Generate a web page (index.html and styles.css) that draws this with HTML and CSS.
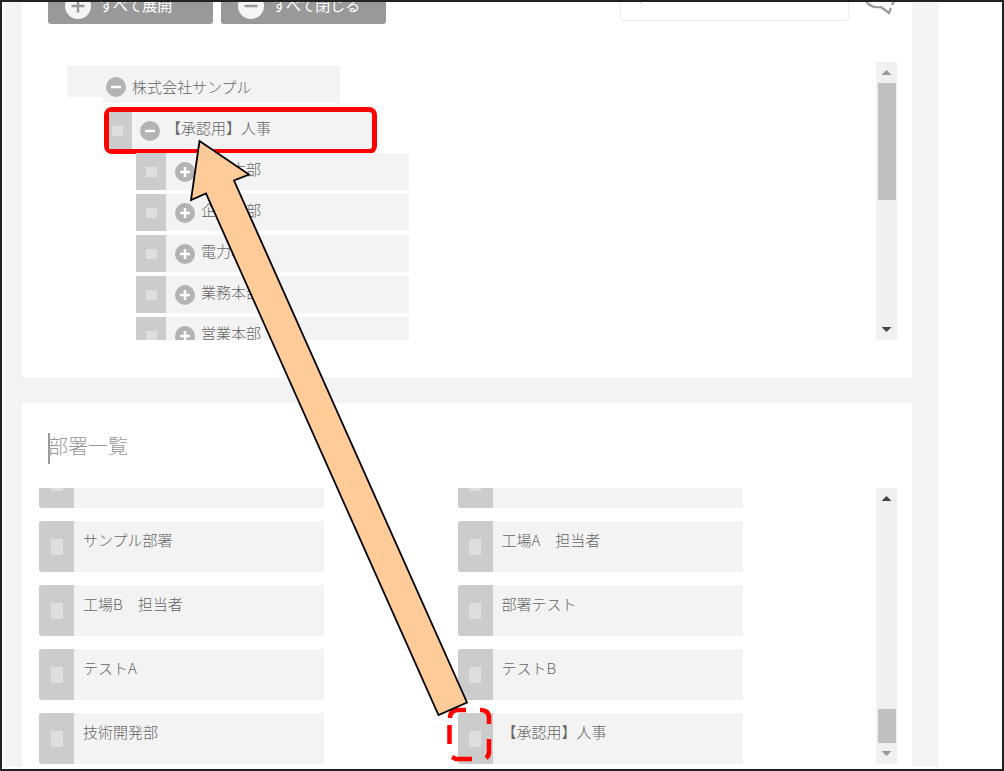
FILE: index.html
```html
<!DOCTYPE html>
<html lang="ja">
<head>
  <meta charset="UTF-8">
  <meta name="viewport" content="width=device-width, initial-scale=1.0">
  <title>部署一覧</title>
  <link rel="stylesheet" href="styles.css">
</head>
<body>
  <div class="frame">
    <main class="page">
      <section class="panel tree-panel">
        <div class="toolbar">
          <button type="button" class="tool-btn">
            <svg class="tool-icon" viewBox="0 0 26 26"><circle cx="13" cy="13" r="13" fill="#f5f5f5"/><path d="M6.500 13h13M13 6.500v13" stroke="#999" stroke-width="2.500"/></svg>
            <span class="tool-text">すべて展開</span>
          </button>
          <button type="button" class="tool-btn">
            <svg class="tool-icon" viewBox="0 0 26 26"><circle cx="13" cy="13" r="13" fill="#f5f5f5"/><path d="M6.500 13h13" stroke="#999" stroke-width="2.500"/></svg>
            <span class="tool-text">すべて閉じる</span>
          </button>
          <input type="text" class="search" aria-label="部署検索" value="すべて">
          <svg class="chat-icon" viewBox="0 0 30 30"><path d="M1 15C4 20 9 22 16 21L24 27L26 22M27 19L29 15" fill="none" stroke="#999" stroke-width="2.200"/></svg>
        </div>

        <div class="scroll-area tree-area">
          <ul class="tree">
            <li class="node root">
              <svg class="toggle" viewBox="0 0 20 20"><circle cx="10" cy="10" r="10" fill="#b3b3b3"/><path d="M5 10h10" stroke="#fff" stroke-width="2.500"/></svg>
              <span class="name">株式会社サンプル</span>
            </li>
            <li class="node selected">
              <span class="handle"></span>
              <svg class="toggle" viewBox="0 0 20 20"><circle cx="10" cy="10" r="10" fill="#b3b3b3"/><path d="M5 10h10" stroke="#fff" stroke-width="2.500"/></svg>
              <span class="name">【承認用】人事</span>
            </li>
            <li class="node child">
              <span class="handle"></span>
              <svg class="toggle" viewBox="0 0 20 20"><circle cx="10" cy="10" r="10" fill="#b3b3b3"/><path d="M5 10h10M10 5v10" stroke="#fff" stroke-width="2.500"/></svg>
              <span class="name">管理本部</span>
            </li>
            <li class="node child">
              <span class="handle"></span>
              <svg class="toggle" viewBox="0 0 20 20"><circle cx="10" cy="10" r="10" fill="#b3b3b3"/><path d="M5 10h10M10 5v10" stroke="#fff" stroke-width="2.500"/></svg>
              <span class="name">企画本部</span>
            </li>
            <li class="node child">
              <span class="handle"></span>
              <svg class="toggle" viewBox="0 0 20 20"><circle cx="10" cy="10" r="10" fill="#b3b3b3"/><path d="M5 10h10M10 5v10" stroke="#fff" stroke-width="2.500"/></svg>
              <span class="name">電力本部</span>
            </li>
            <li class="node child">
              <span class="handle"></span>
              <svg class="toggle" viewBox="0 0 20 20"><circle cx="10" cy="10" r="10" fill="#b3b3b3"/><path d="M5 10h10M10 5v10" stroke="#fff" stroke-width="2.500"/></svg>
              <span class="name">業務本部</span>
            </li>
            <li class="node child">
              <span class="handle"></span>
              <svg class="toggle" viewBox="0 0 20 20"><circle cx="10" cy="10" r="10" fill="#b3b3b3"/><path d="M5 10h10M10 5v10" stroke="#fff" stroke-width="2.500"/></svg>
              <span class="name">営業本部</span>
            </li>
          </ul>
          <div class="scrollbar">
            <span class="arrow up off"></span>
            <span class="thumb tall"></span>
            <span class="arrow down"></span>
          </div>
        </div>
      </section>

      <section class="panel list-panel">
        <h2 class="title">部署一覧</h2>
        <div class="scroll-area list-area">
          <ul class="cards">
            <li class="card"><span class="grip"></span></li>
            <li class="card"><span class="grip"></span></li>
            <li class="card"><span class="grip"></span><span class="label">サンプル部署</span></li>
            <li class="card"><span class="grip"></span><span class="label">工場A　担当者</span></li>
            <li class="card"><span class="grip"></span><span class="label">工場B　担当者</span></li>
            <li class="card"><span class="grip"></span><span class="label">部署テスト</span></li>
            <li class="card"><span class="grip"></span><span class="label">テストA</span></li>
            <li class="card"><span class="grip"></span><span class="label">テストB</span></li>
            <li class="card"><span class="grip"></span><span class="label">技術開発部</span></li>
            <li class="card"><span class="grip"></span><span class="label">【承認用】人事</span></li>
          </ul>
          <div class="scrollbar">
            <span class="arrow up"></span>
            <span class="thumb short"></span>
            <span class="arrow down off"></span>
          </div>
        </div>
      </section>
    </main>
  </div>

  <!-- drag guide: from the card to the tree node -->
  <svg class="guide" width="1004" height="771" viewBox="0 0 1004 771">
    <path d="M450 718Q450 710 459 710H466M480 710Q489 710 489 718V724M449.500 725V744M489 739V752Q489 756 486 758M452 757L456 759H472" fill="none" stroke="#f00" stroke-width="4.500"/>
    <path d="M199.500 141L249 174.500L234 180.500L467 702.500L438.500 715L206 193.500L191 200Z" fill="#fc9" stroke="#000" stroke-width="1.800"/>
  </svg>
</body>
</html>
```
FILE: styles.css
```css
* {
  box-sizing: border-box;
}
body {
  margin: 0;
  font-family: "Noto Sans CJK JP", "Noto Sans", sans-serif;
  font-size: 15px;
  font-weight: 300;
  color: #666;
  background: #fff;
}
ul {
  list-style: none;
  margin: 0;
  padding: 0;
}
.frame {
  height: 100vh;
  border: 2px solid #222;
  padding: 0 64px 2px 2px;
  overflow: hidden;
}
.page {
  display: flex;
  flex-direction: column;
  gap: 26px;
  height: 100%;
  padding: 0 26px 0 18px;
  background: #f3f3f3;
}
.panel {
  background: #fff;
}
.tree-panel {
  padding: 0 15px 37px 26px;
}
.list-panel {
  flex: 1;
  padding: 30px 15px 0 17px;
}

/* toolbar */
.toolbar {
  display: flex;
  align-items: flex-end;
  gap: 8px;
  height: 22px;
  margin-bottom: 38px;
  overflow: hidden;
}
.tool-btn {
  display: flex;
  flex: none;
  align-items: center;
  gap: 8px;
  width: 165px;
  height: 37px;
  padding: 0 0 0 17px;
  border: 0;
  border-radius: 3px;
  background: #999;
  color: #fff;
  font-family: inherit;
  font-size: 15px;
}
.tool-icon {
  width: 26px;
  height: 26px;
}
.tool-text {
  padding-bottom: 3px;
}
.search {
  flex: none;
  width: 229px;
  height: 40px;
  margin: 0 8px 3px auto;
  padding: 0 14px 14px;
  border: 1px solid #eee;
  border-radius: 3px;
  color: #333;
  font-family: inherit;
  font-size: 15px;
}
.chat-icon {
  flex: none;
  width: 30px;
  height: 30px;
  margin: 0 2px 8px 0;
}

/* scrolling boxes */
.scroll-area {
  display: flex;
  justify-content: space-between;
  overflow: hidden;
}
.tree-area {
  height: 278px;
}
.list-area {
  height: 276px;
}
.scrollbar {
  display: flex;
  flex: none;
  flex-direction: column;
  align-items: center;
  width: 21px;
  background: #f0f0f0;
}
.thumb {
  width: 18px;
  background: #c0c0c0;
}
.tall {
  height: 117px;
  margin-bottom: auto;
}
.short {
  height: 34px;
  margin-top: auto;
}
.arrow {
  width: 10px;
  height: 5px;
  margin: 8px 0;
  background: #444;
}
.up {
  clip-path: polygon(50% 0, 100% 100%, 0 100%);
}
.down {
  clip-path: polygon(0 0, 100% 0, 50% 100%);
}
.off {
  background: #999;
}

/* tree */
.tree {
  display: flex;
  flex: 1;
  flex-direction: column;
  gap: 4px;
  padding: 4px 0 0 19px;
}
.node {
  display: flex;
  flex: none;
  align-items: center;
  gap: 6px;
  width: 273px;
  height: 37px;
  background: #f3f3f3;
}
.root {
  padding: 5px 0 0 39px;
  background: linear-gradient(#f3f3f3, #f3f3f3) right / 237px 37px no-repeat,
    linear-gradient(#f3f3f3, #f3f3f3) left top / 100% 31px no-repeat;
}
.selected {
  height: 47px;
  margin: 0 0 -5px 37px;
  border: 5px solid #f00;
  border-radius: 8px;
}
.child {
  margin-left: 69px;
}
.handle {
  display: flex;
  align-items: center;
  justify-content: center;
  align-self: stretch;
  width: 30px;
  margin-right: 3px;
  background: #ccc;
}
.handle::before {
  content: "";
  width: 11px;
  height: 10px;
  background: #dedede;
}
.selected .handle {
  width: 23px;
  padding-right: 7px;
  margin-right: 2px;
}
.toggle {
  width: 20px;
  height: 20px;
}
.name {
  padding-bottom: 6px;
}
.root .name {
  padding-bottom: 2px;
}

/* department cards */
.title {
  display: flex;
  align-items: center;
  height: 31px;
  margin: 0 0 24px 9px;
  padding-bottom: 6px;
  box-shadow: inset 2px 0 #999;
  color: #999;
  font-size: 20px;
  font-weight: 300;
}
.cards {
  display: grid;
  flex: 1;
  grid-template-columns: 1fr 1fr;
  align-content: end;
  row-gap: 13px;
}
.card {
  display: flex;
  width: 285px;
  max-width: 90%;
  height: 51px;
  border-radius: 3px 0 0 3px;
  background: #f3f3f3;
}
.grip {
  display: flex;
  flex: none;
  align-items: center;
  justify-content: center;
  width: 35px;
  border-radius: 3px 0 0 3px;
  background: #ccc;
}
.grip::before {
  content: "";
  width: 12px;
  height: 16px;
  background: #dedede;
}
.label {
  padding: 8px 0 0 9px;
  line-height: 22px;
}

.guide {
  position: absolute;
  top: 0;
  left: 0;
  pointer-events: none;
}
```
